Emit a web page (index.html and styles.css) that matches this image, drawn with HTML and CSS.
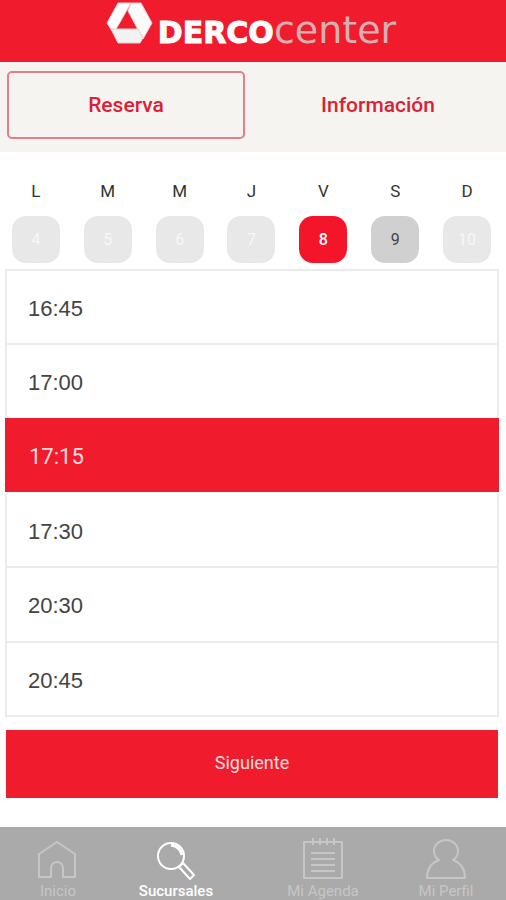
FILE: index.html
```html
<!DOCTYPE html>
<html lang="es">
<head>
<meta charset="utf-8">
<meta name="viewport" content="width=device-width, initial-scale=1">
<title>DercoCenter</title>
<link rel="stylesheet" href="styles.css">
</head>
<body>
<header class="header">
  <svg class="mark" viewBox="0 0 48 44" aria-hidden="true">
    <g stroke="#e5cfcf" stroke-width="1" stroke-linejoin="round">
      <path fill="#fff" d="M12 1H25L9 29H6L1 21Z"/>
      <path fill="#fafafa" d="M25 1H35L46 21L37 37L22 9Z"/>
      <path fill="#f2f2f2" d="M5 27H32L37 36L34 41H12Z"/>
    </g>
  </svg>
  <h1 class="brand"><span class="brand-main">DERCO</span><span class="brand-sub">center</span></h1>
</header>
<nav class="tabs">
  <button class="tab tab-active" type="button">Reserva</button>
  <button class="tab" type="button">Información</button>
</nav>
<main class="main">
  <div class="days">
    <div class="day"><span>L</span><button class="date" type="button" disabled>4</button></div>
    <div class="day"><span>M</span><button class="date" type="button" disabled>5</button></div>
    <div class="day"><span>M</span><button class="date" type="button" disabled>6</button></div>
    <div class="day"><span>J</span><button class="date" type="button" disabled>7</button></div>
    <div class="day"><span>V</span><button class="date date-active" type="button">8</button></div>
    <div class="day"><span>S</span><button class="date date-open" type="button">9</button></div>
    <div class="day"><span>D</span><button class="date" type="button" disabled>10</button></div>
  </div>
  <div class="slots">
    <button class="slot" type="button">16:45</button>
    <button class="slot" type="button">17:00</button>
    <button class="slot slot-active" type="button">17:15</button>
    <button class="slot" type="button">17:30</button>
    <button class="slot" type="button">20:30</button>
    <button class="slot" type="button">20:45</button>
  </div>
  <button class="next" type="button">Siguiente</button>
</main>
<nav class="bottom">
  <a class="item" href="#inicio">
    <svg class="icon" viewBox="0 0 44 44" aria-hidden="true"><path d="M3 17L21 5L39 17V40H27V31A6 6 0 0 0 15 31V40H3Z"/></svg>
    <span>Inicio</span>
  </a>
  <a class="item item-active" href="#sucursales">
    <svg class="icon" viewBox="0 0 44 44" aria-hidden="true"><circle cx="17" cy="19" r="13"/><path d="M25 30L29 26L40 38L36 42Z"/><path class="thick" d="M17 8Q26 9 28 18"/></svg>
    <span>Sucursales</span>
  </a>
  <a class="item" href="#agenda">
    <svg class="icon" viewBox="0 0 44 44" aria-hidden="true"><path d="M3 5H41V41H3ZM10 16H34M10 22H34M10 28H34M10 34H34"/><path d="M12 1V8M19 1V8M26 1V8M33 1V8"/></svg>
    <span>Mi Agenda</span>
  </a>
  <a class="item" href="#perfil">
    <svg class="icon" viewBox="0 0 44 44" aria-hidden="true"><path d="M15 23C10 20 10 16 10 14A12 11 0 0 1 34 14C34 16 34 20 29 23C37 26 41 32 41 41H3C3 32 7 26 15 23Z"/></svg>
    <span>Mi Perfil</span>
  </a>
</nav>
</body>
</html>
```
FILE: styles.css
```css
* { box-sizing: border-box; }

body {
  display: flex;
  flex-direction: column;
  min-height: 100vh;
  margin: 0;
  background: #fff;
  color: #333;
  font-family: Roboto, "Liberation Sans", sans-serif;
}

button {
  margin: 0;
  padding: 0;
  border: 0;
  background: none;
  color: inherit;
  font: inherit;
}

.header {
  display: flex;
  justify-content: center;
  height: 62px;
  padding-right: 4px;
  background: #f01c2e;
}

.mark {
  width: 48px;
  height: 44px;
  margin-top: 2px;
}

.brand {
  margin: 0 0 0 4px;
  color: #fff;
  font-family: "DejaVu Sans", sans-serif;
  line-height: 60px;
  white-space: nowrap;
}

.brand-main {
  font-size: 30px;
  font-weight: 700;
  -webkit-text-stroke: 1px #fff;
}

.brand-sub {
  color: #d5b0b2;
  font-size: 38px;
  font-weight: 400;
}

.tabs {
  display: grid;
  grid-template-columns: 1fr 1fr;
  gap: 14px;
  padding: 9px 9px 13px 7px;
  background: #f5f4f0;
}

.tab {
  height: 68px;
  border: 2px solid transparent;
  border-radius: 5px;
  color: #dc1f35;
  font-size: 21px;
  font-weight: 500;
}

.tab-active { border-color: #e17f8b; }

.main {
  display: flex;
  flex: 1;
  flex-direction: column;
  padding: 28px 7px 29px 5px;
}

.days {
  display: grid;
  grid-template-columns: repeat(7, 1fr);
  margin: 0 -4px 6px -5px;
}

.day {
  display: flex;
  flex-direction: column;
  align-items: center;
  gap: 14px;
  height: 83px;
  font-size: 17px;
  line-height: 22px;
}

.date {
  width: 48px;
  height: 47px;
  border-radius: 14px;
  background: #e8e8e8;
  color: #f7f7f7;
  font-size: 16px;
}

.date-active {
  background: #f4152a;
  color: #fff;
  font-weight: 500;
}

.date-open {
  background: #d0d0d0;
  color: #444;
}

.slots {
  display: grid;
  flex: 1;
  grid-auto-rows: 1fr;
  border: 2px solid #ebebeb;
  border-bottom: 0;
}

.slot {
  padding: 4px 21px 0;
  border-bottom: 2px solid #ebebeb;
  color: #444;
  font-family: "Liberation Sans", sans-serif;
  font-size: 22px;
  text-align: left;
}

.slot-active {
  margin: -2px -2px 0;
  padding: 4px 24px 0;
  border-color: #fff;
  background: #f01c2e;
  color: #ffdede;
  font-family: Roboto, sans-serif;
}

.next {
  height: 68px;
  margin: 13px 1px 0;
  padding-bottom: 4px;
  background: #f01c2e;
  color: #ffdede;
  font-size: 18px;
}

.bottom {
  display: grid;
  grid-template-columns: 116fr 120fr 174fr 72fr;
  height: 73px;
  padding: 10px 24px 0 0;
  background: #aaa;
}

.item {
  display: flex;
  flex-direction: column;
  align-items: center;
  color: #c6c6c6;
  font-size: 15px;
  font-weight: 400;
  line-height: 20px;
  text-decoration: none;
  white-space: nowrap;
}

.item-active {
  color: #fff;
  font-weight: 500;
}

.icon {
  width: 44px;
  height: 44px;
  fill: none;
  stroke: currentColor;
  stroke-width: 2;
  stroke-linejoin: round;
}

.icon .thick { stroke-width: 3; }
```
